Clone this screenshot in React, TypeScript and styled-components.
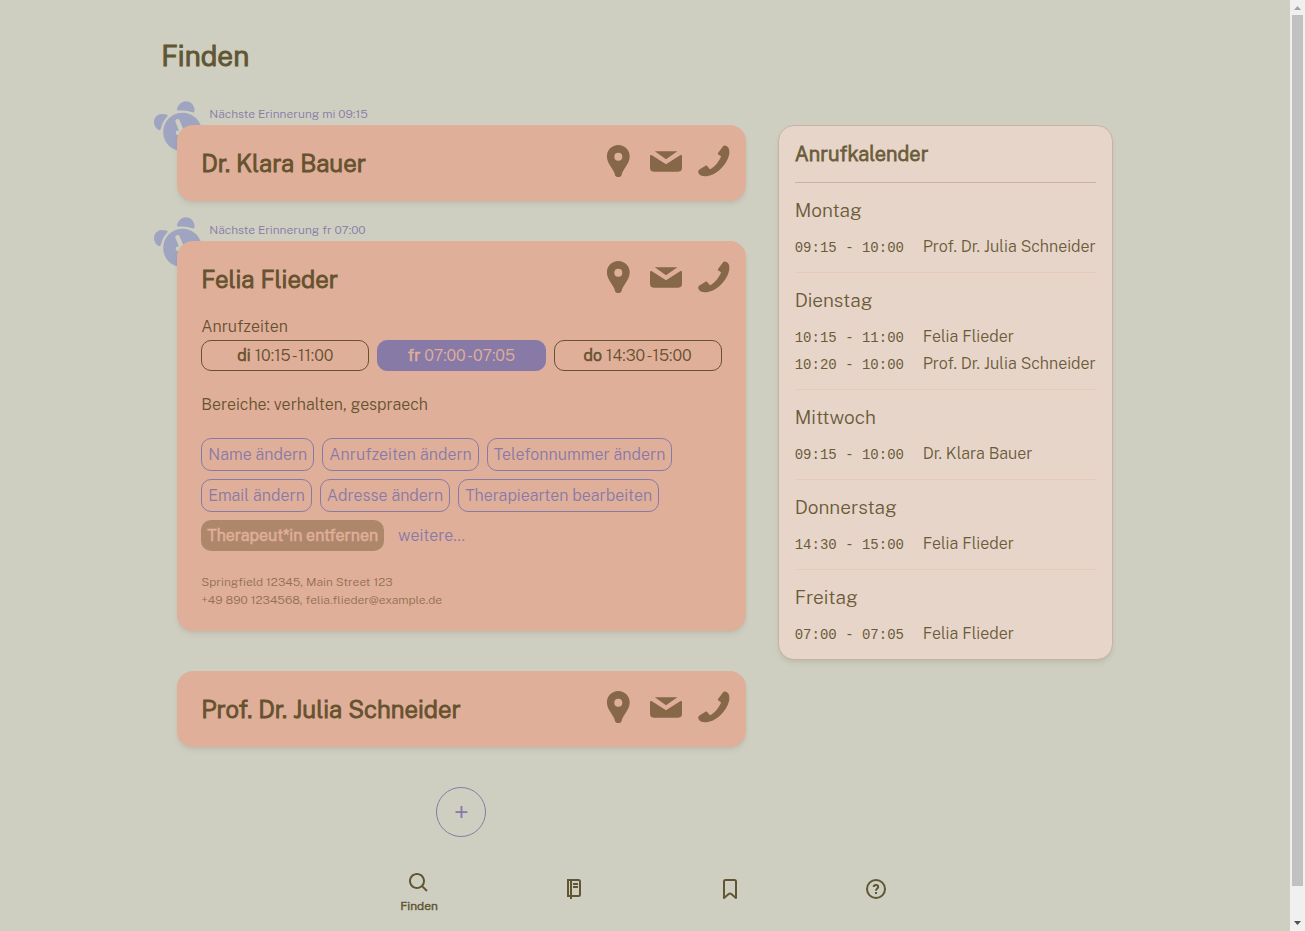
import { ReactNode, useState } from "react";
import styled, { createGlobalStyle, css } from "styled-components";
import { BiSearch } from "react-icons/bi";

const color = {
  page: "#cfcfc1",
  ink: "#605634",
  cardInk: "#66522f",
  card: "#e0af9a",
  purple: "#887aa7",
  clock: "#9fa4c0",
  icon: "#866848",
  panel: "#e7d5ca",
  panelInk: "#6b5c39",
  line: "#c6b3a6",
  softLine: "#e8cabc",
  danger: "#ae876b",
  address: "#937052",
};

const Global = createGlobalStyle`
  *, *::before, *::after { box-sizing: border-box; }
  body {
    margin: 0;
    background: ${color.page};
    color: ${color.ink};
    font-family: "Public Sans", Roboto, "Liberation Sans", sans-serif;
    font-weight: 300;
    font-size: 16px;
    line-height: 24px;
  }
  h1, h2, h3, p, ul, address { margin: 0; padding: 0; }
  ul { list-style: none; }
  address { font-style: normal; }
  button { font: inherit; cursor: pointer; margin: 0; background: none; border: 0; }
  a { color: inherit; text-decoration: none; }
`;

/* Bold is the light cut thickened with a stroke, so it keeps the light widths. */
const bold = css`
  font-weight: 300;
  -webkit-text-stroke: 0.04em currentColor;
`;

const shadow = css`
  box-shadow: 0 4px 6px -1px rgba(0, 0, 0, 0.07), 0 2px 4px -2px rgba(0, 0, 0, 0.07);
`;

const Shell = styled.div`
  display: flex;
  align-items: stretch;
  min-height: 100vh;
`;

const Page = styled.div`
  flex: 1;
  min-width: 0;
  padding-bottom: 94px;
`;

const Content = styled.main`
  width: 75%;
  margin: 0 auto;
  padding-top: 36px;
`;

const Title = styled.h1`
  font-size: 28px;
  line-height: 40px;
  ${bold}
`;

const Columns = styled.div`
  display: flex;
  align-items: flex-start;
  gap: 32px;
  padding: 49px 16px 0;
`;

const People = styled.div`
  flex: 1;
  min-width: 0;
  display: flex;
  flex-direction: column;
  gap: 40px;
`;

const Person = styled.section`
  position: relative;
`;

const Card = styled.div`
  position: relative;
  background: ${color.card};
  color: ${color.cardInk};
  border-radius: 16px;
  padding: 0 24px;
  ${shadow}
`;

const CardHead = styled.header`
  display: flex;
  align-items: center;
  justify-content: space-between;
  height: 76px;
  margin-right: -8px;
`;

const Name = styled.h2`
  font-size: 24px;
  line-height: 32px;
  ${bold}
`;

const Contacts = styled.div`
  display: flex;
  gap: 16px;
  padding-bottom: 4px;
`;

const ContactLink = styled.a`
  display: block;
  color: ${color.icon};

  svg { display: block; width: 32px; height: 32px; fill: currentColor; }
`;

const Reminder = styled.p`
  position: absolute;
  top: -20px;
  left: 32px;
  font-size: 12px;
  line-height: 18px;
  color: ${color.purple};
`;

const Clock = styled.svg`
  position: absolute;
  top: -25px;
  left: -23px;
  width: 54px;
  height: 54px;
`;

const Details = styled.div`
  margin-top: -2px;
  padding-bottom: 22px;
`;

const Times = styled.div`
  display: grid;
  grid-template-columns: repeat(3, 1fr);
  gap: 8px;
  padding: 1px 0 22px;
`;

const pill = css`
  border-radius: 10px;
  line-height: 23px;
`;

const TimeButton = styled.button<{ $active?: boolean }>`
  ${pill}
  padding: 3px 6px;
  border: 1px solid ${(p) => (p.$active ? color.purple : color.cardInk)};
  background: ${(p) => (p.$active ? color.purple : "transparent")};
  color: ${(p) => (p.$active ? color.card : color.cardInk)};

  strong { ${bold} }
`;

const Actions = styled.div`
  display: flex;
  flex-wrap: wrap;
  gap: 8px;
  padding: 21px 0 22px;
`;

const Action = styled.button<{ $kind?: "danger" | "plain" }>`
  ${pill}
  padding: 4px 6px;
  color: ${color.purple};
  border: ${(p) => (p.$kind ? "0" : `1px solid ${color.purple}`)};
  ${(p) =>
    p.$kind === "danger" &&
    css`
      background: ${color.danger};
      color: ${color.card};
      ${bold}
    `}
`;

const Address = styled.address`
  font-size: 12px;
  line-height: 18px;
  color: ${color.address};
`;

const AddButton = styled.button`
  align-self: center;
  width: 50px;
  height: 50px;
  padding: 0;
  border: 1px solid ${color.purple};
  border-radius: 50%;
  color: ${color.purple};
  font-size: 28px;
`;

const Calendar = styled.aside`
  background: ${color.panel};
  color: ${color.panelInk};
  border: 1px solid ${color.line};
  border-radius: 16px;
  padding: 0 16px;
  ${shadow}
`;

const CalendarTitle = styled.h2`
  padding: 14px 0;
  border-bottom: 1px solid ${color.line};
  font-size: 20px;
  line-height: 28px;
  ${bold}
`;

const Day = styled.section`
  padding: 13px 0 12px;
  & + & { border-top: 1px solid ${color.softLine}; }
`;

const DayName = styled.h3`
  margin-bottom: 9px;
  font-size: 19px;
  line-height: 28px;
  font-weight: 300;
`;

const Call = styled.li`
  display: grid;
  grid-template-columns: 112px auto;
  justify-content: start;
  align-items: baseline;
  gap: 16px;
  line-height: 27px;
  white-space: nowrap;

  time {
    font-family: "Liberation Mono", monospace;
    font-size: 14px;
    line-height: 24px;
  }
`;

const Nav = styled.nav`
  position: fixed;
  left: 0;
  right: 15px;
  bottom: 0;
  height: 84px;
  background: ${color.page};
`;

const NavList = styled.ul`
  display: grid;
  grid-template-columns: 150fr 160fr 152fr 140fr;
  align-items: center;
  height: 100%;
  max-width: 602px;
  margin: 0 auto;
`;

const NavItem = styled.a<{ $active?: boolean }>`
  display: flex;
  flex-direction: column;
  align-items: center;
  gap: 3px;
  padding-top: ${(p) => (p.$active ? "6px" : "0")};
  font-size: 12px;
  line-height: 16px;
  ${bold}
`;

const NavIcon = styled.svg`
  width: 24px;
  height: 24px;
  fill: none;
  stroke: currentColor;
  stroke-width: 2;
  stroke-linejoin: round;
`;

const Scrollbar = styled.div`
  position: sticky;
  top: 0;
  flex: 0 0 15px;
  height: 100vh;
  display: flex;
  flex-direction: column;
  align-items: center;
  background: #f0f0f0;

  svg { display: block; flex: 0 0 15px; width: 15px; height: 15px; }
`;

const Track = styled.div`
  flex: 1;
  width: 11px;
`;

const Thumb = styled.div`
  height: 96.7%;
  background: #c1c1c1;
`;

function ContactIcons({ name }: { name: string }) {
  const [pin, mail, phone] = [
    "M16.300 0C9.900 0 4.900 5 4.900 11.200c0 4.600 2.200 8 4.900 12 2.200 3.200 2.700 4.800 3.200 6.800.4 1.400 1.600 2 3.300 2s2.900-.6 3.300-2c.5-2 1-3.600 3.200-6.800 2.700-4 4.900-7.400 4.900-12C27.700 5 22.700 0 16.300 0zm0 7.700a4 4 0 0 1 0 8 4 4 0 0 1 0-8z",
    "M4.800 6.300h22.600L16 14.200zM0 11.200c0-1.100 1-1.600 1.900-1L16 19.300l14.100-9.100c.9-.6 1.900-.1 1.900 1v11.900c0 2.200-1.400 3.600-3.600 3.600H3.600C1.400 26.700 0 25.300 0 23.100z",
    "M25.300.9C27-.2 29.500.8 30.600 3.100c1.300 2.900.9 7-1 11.100-4.200 9-12.500 15.900-20.900 17-4 .5-7-.5-8.200-3.200-.6-1.300-.3-2.700.9-3.400l6.100-3.800c.7-.4 1.200-.3 1.700.2l2.300 2.700c.4.5 1 .5 1.600.1 4.200-2.700 7.600-6.900 9.700-11.500.3-.7.1-1.200-.5-1.600l-1.900-1.100c-.6-.4-.7-.9-.4-1.500z",
  ];
  const items: [string, string, string][] = [
    ["Adresse", pin, "#adresse"],
    ["Email", mail, "#email"],
    ["Anrufen", phone, "#anrufen"],
  ];
  return (
    <Contacts>
      {items.map(([label, d, href]) => (
        <ContactLink key={label} href={href} aria-label={`${label}: ${name}`}>
          <svg viewBox="0 0 32 32"><path fillRule="evenodd" d={d} /></svg>
        </ContactLink>
      ))}
    </Contacts>
  );
}

function AlarmClock() {
  return (
    <Clock viewBox="0 0 54 54" aria-hidden="true" fill={color.clock}>
      <circle cx="28.500" cy="32" r="19.300" />
      <path d="M23 9.600C23.800 4.900 27.300 1.500 31.700 1.300c4.300-.1 7.800 2.900 8.700 7.400.4 2.400.2 3.700-1.300 3.700-1 0-2.100-.7-4.300-1.200-3-.8-6.600-.9-9.800-.7-1.400.1-2.200-.1-2-.9z" />
      <path d="M12.500 14.500c1.300.2 1.500 1.200.6 2.200-2.700 2.800-4.400 5.800-5.500 9.500-.7 2.400-1.100 4.100-2.500 4C2.600 29 0 25.800 0 21.900 0 17.700 3.300 14.200 7.500 14z" />
      <path d="M23.500 21.200l4.600 11-4.200.5" fill="none" stroke={color.page} strokeWidth="4.400" strokeLinecap="round" strokeLinejoin="round" />
    </Clock>
  );
}

function PersonCard({ name, reminder, children }: { name: string; reminder?: string; children?: ReactNode }) {
  return (
    <Person>
      {reminder && (
        <>
          <AlarmClock />
          <Reminder>Nächste Erinnerung {reminder}</Reminder>
        </>
      )}
      <Card>
        <CardHead>
          <Name>{name}</Name>
          <ContactIcons name={name} />
        </CardHead>
        {children}
      </Card>
    </Person>
  );
}

const callTimes = [
  { day: "di", from: "10:15", to: "11:00" },
  { day: "fr", from: "07:00", to: "07:05" },
  { day: "do", from: "14:30", to: "15:00" },
];

const actions = [
  "Name ändern",
  "Anrufzeiten ändern",
  "Telefonnummer ändern",
  "Email ändern",
  "Adresse ändern",
  "Therapiearten bearbeiten",
];

const week: { day: string; calls: [string, string][] }[] = [
  { day: "Montag", calls: [["09:15 - 10:00", "Prof. Dr. Julia Schneider"]] },
  {
    day: "Dienstag",
    calls: [
      ["10:15 - 11:00", "Felia Flieder"],
      ["10:20 - 10:00", "Prof. Dr. Julia Schneider"],
    ],
  },
  { day: "Mittwoch", calls: [["09:15 - 10:00", "Dr. Klara Bauer"]] },
  { day: "Donnerstag", calls: [["14:30 - 15:00", "Felia Flieder"]] },
  { day: "Freitag", calls: [["07:00 - 07:05", "Felia Flieder"]] },
];

export default function App() {
  const [selected, setSelected] = useState("fr");
  return (
    <>
      <Global />
      <Shell>
        <Page>
          <Content>
            <Title>Finden</Title>
            <Columns>
              <People>
                <PersonCard name="Dr. Klara Bauer" reminder="mi 09:15" />
                <PersonCard name="Felia Flieder" reminder="fr 07:00">
                  <Details>
                    <p>Anrufzeiten</p>
                    <Times>
                      {callTimes.map((t) => (
                        <TimeButton key={t.day} $active={t.day === selected} onClick={() => setSelected(t.day)}>
                          <strong>{t.day}</strong> {t.from}{"\u2009"}-{"\u2009"}{t.to}
                        </TimeButton>
                      ))}
                    </Times>
                    <p>Bereiche: verhalten, gespraech</p>
                    <Actions>
                      {actions.map((a) => (
                        <Action key={a}>{a}</Action>
                      ))}
                      <Action $kind="danger">Therapeut*in entfernen</Action>
                      <Action $kind="plain">weitere…</Action>
                    </Actions>
                    <Address>
                      Springfield 12345, Main Street 123
                      <br />
                      +49 890 1234568, felia.flieder@example.de
                    </Address>
                  </Details>
                </PersonCard>
                <PersonCard name="Prof. Dr. Julia Schneider" />
                <AddButton aria-label="Hinzufügen">+</AddButton>
              </People>
              <Calendar>
                <CalendarTitle>Anrufkalender</CalendarTitle>
                {week.map(({ day, calls }) => (
                  <Day key={day}>
                    <DayName>{day}</DayName>
                    <ul>
                      {calls.map(([time, who]) => (
                        <Call key={time}>
                          <time>{time}</time>
                          <span>{who}</span>
                        </Call>
                      ))}
                    </ul>
                  </Day>
                ))}
              </Calendar>
            </Columns>
          </Content>
        </Page>
        <Scrollbar aria-hidden="true">
          <svg viewBox="0 0 15 15" fill="#a3a3a3"><path d="M4 10h7L7.500 6z" /></svg>
          <Track><Thumb /></Track>
          <svg viewBox="0 0 15 15" fill="#505050"><path d="M4 5h7L7.500 9z" /></svg>
        </Scrollbar>
      </Shell>
      <Nav>
        <NavList>
          <li>
            <NavItem href="#finden" $active>
              <BiSearch size={24} />
              Finden
            </NavItem>
          </li>
          <li>
            <NavItem href="#notizen" aria-label="Notizen">
              <NavIcon viewBox="0 0 24 24">
                <path d="M6 3h10.500A1.500 1.500 0 0 1 18 4.500v13a1.500 1.500 0 0 1-1.500 1.500H6z" strokeLinejoin="miter" />
                <path d="M9 3v19M11 7h5M11 10h5" />
              </NavIcon>
            </NavItem>
          </li>
          <li>
            <NavItem href="#gemerkt" aria-label="Gemerkt">
              <NavIcon viewBox="0 0 24 24">
                <path d="M6 21V4.500A1.500 1.500 0 0 1 7.500 3h9A1.500 1.500 0 0 1 18 4.500V21l-4.700-4a2 2 0 0 0-2.600 0z" />
              </NavIcon>
            </NavItem>
          </li>
          <li>
            <NavItem href="#hilfe" aria-label="Hilfe">
              <NavIcon viewBox="0 0 24 24">
                <circle cx="12" cy="12" r="9" />
                <path d="M9.700 10c0-1.200 1-2 2.300-2s2.200.8 2.200 2c0 1.600-2.200 1.600-2.200 3.800M12 15v2" />
              </NavIcon>
            </NavItem>
          </li>
        </NavList>
      </Nav>
    </>
  );
}
